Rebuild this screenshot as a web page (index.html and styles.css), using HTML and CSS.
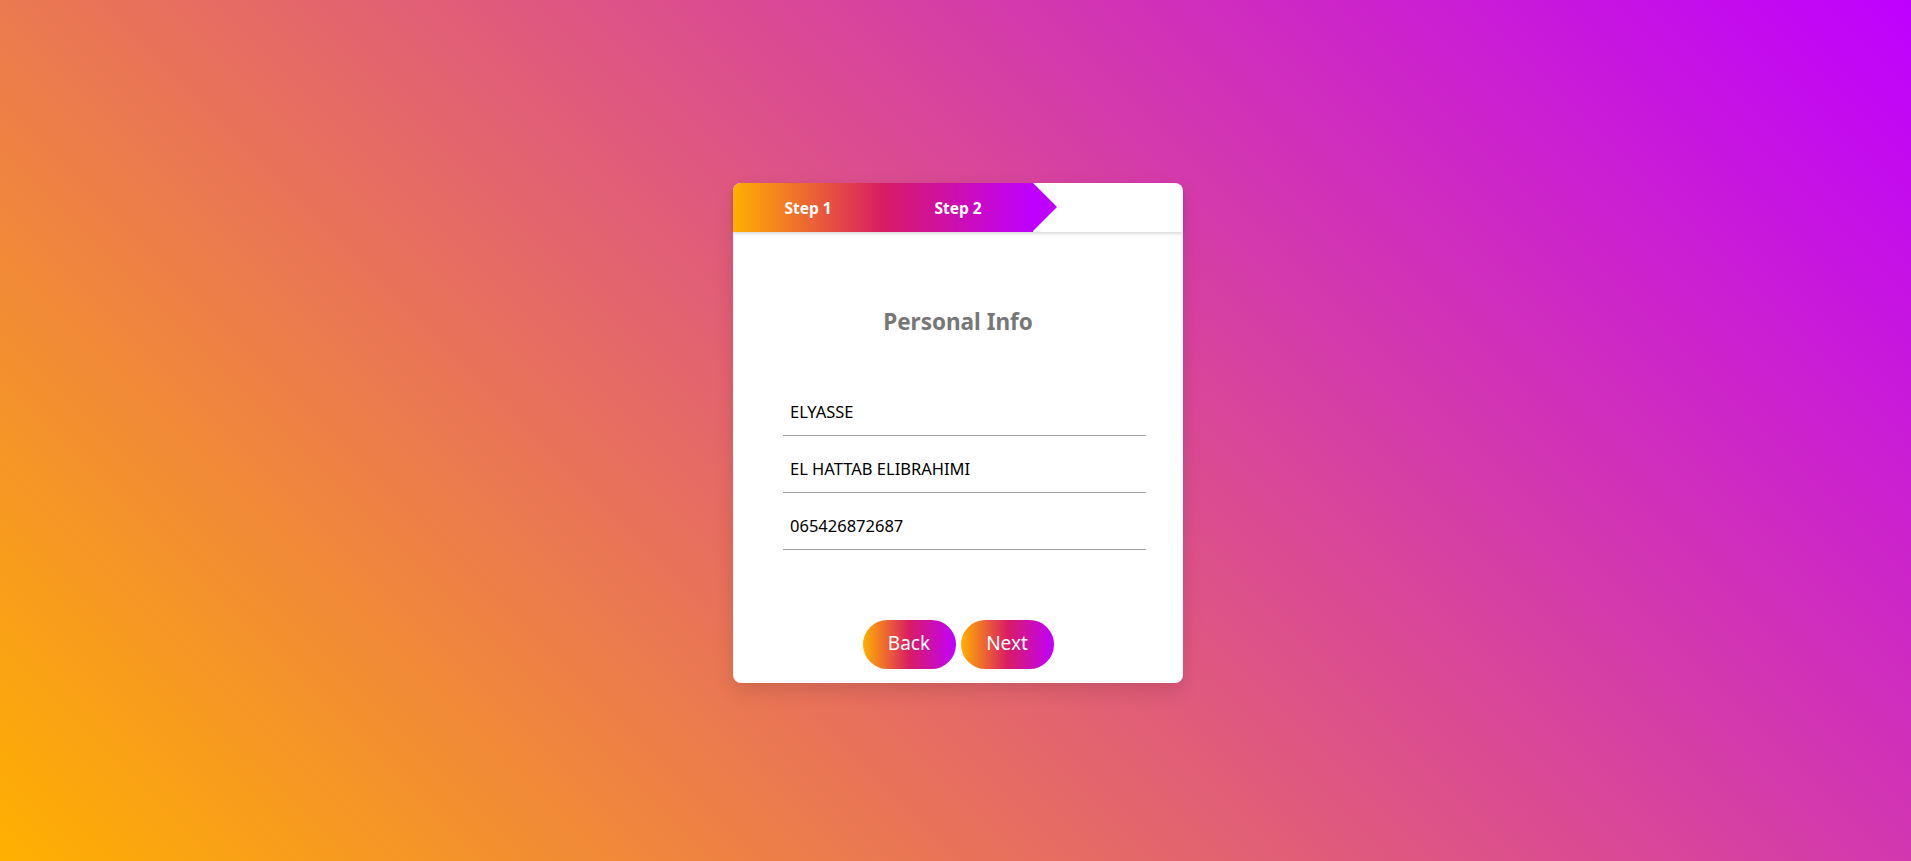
FILE: index.html
```html
<!DOCTYPE html>
<html lang="en">
<head>
<meta charset="utf-8">
<title>Multi-step form</title>
<link rel="stylesheet" href="styles.css">
</head>
<body>
<main class="page">
  <form class="card">
    <div class="steps">
      <div class="progress">
        <span class="step">Step 1</span>
        <span class="step">Step 2</span>
      </div>
    </div>
    <h2 class="title">Personal Info</h2>
    <div class="fields">
      <input class="field" type="text" value="ELYASSE">
      <input class="field" type="text" value="EL HATTAB ELIBRAHIMI">
      <input class="field" type="text" value="065426872687">
    </div>
    <div class="actions">
      <button type="button" class="btn">Back</button>
      <button type="button" class="btn">Next</button>
    </div>
  </form>
</main>
</body>
</html>
```

FILE: styles.css
```css
html, body {
  margin: 0;
  padding: 0;
  height: 100%;
}

body {
  font-family: "Noto Sans", "Open Sans", sans-serif;
  background: linear-gradient(45deg, #ffb000, #bf00ff);
}

.page {
  height: 100vh;
  display: flex;
  align-items: center;
  justify-content: center;
  padding-top: 4px;
  padding-left: 5px;
  box-sizing: border-box;
}

.card {
  width: 450px;
  height: 500px;
  background: #fff;
  border-radius: 8px;
  box-shadow: 0 8px 20px rgba(0, 0, 0, 0.12);
  display: flex;
  flex-direction: column;
}

.steps {
  height: 49px;
  display: flex;
  border-radius: 8px 8px 0 0;
  box-shadow: 0 2px 3px rgba(0, 0, 0, 0.14);
  flex-shrink: 0;
}

.progress {
  position: relative;
  width: 300px;
  height: 49px;
  display: flex;
  border-radius: 8px 0 0 0;
  background: linear-gradient(to right, #ffb000 0%, #d91c64 50%, #bf00ff 100%);
}

.progress::after {
  content: "";
  position: absolute;
  left: 100%;
  top: 0;
  border-style: solid;
  border-width: 24.5px 0 24.5px 24px;
  border-color: transparent transparent transparent #bf00ff;
}

.step {
  flex: 1;
  display: flex;
  align-items: center;
  justify-content: center;
  color: #fff;
  font-weight: 700;
  font-size: 15.5px;
  padding-top: 1px;
}

.title {
  margin: 75px 0 0;
  text-align: center;
  color: #777;
  font-size: 22.5px;
  font-weight: 700;
  line-height: 30px;
}

.fields {
  margin-top: 51px;
  display: flex;
  flex-direction: column;
  gap: 9px;
  padding-left: 50px;
}

.field {
  width: 363px;
  height: 48px;
  box-sizing: border-box;
  border: none;
  border-bottom: 1px solid #a0a0a0;
  outline: none;
  padding: 0 0 0 7px;
  font-family: "Noto Sans", "Open Sans", sans-serif;
  font-size: 16.5px;
  color: #000;
  background: transparent;
}

.actions {
  margin-top: auto;
  margin-bottom: 14px;
  display: flex;
  justify-content: center;
  gap: 5px;
}

.btn {
  width: 93px;
  height: 49px;
  border: none;
  border-radius: 25px;
  background: linear-gradient(to right, #ffb000 0%, #d91c64 50%, #bf00ff 100%);
  color: #fff;
  font-family: "Noto Sans", "Open Sans", sans-serif;
  font-size: 19px;
  padding: 0 0 2px;
  cursor: pointer;
}
```
